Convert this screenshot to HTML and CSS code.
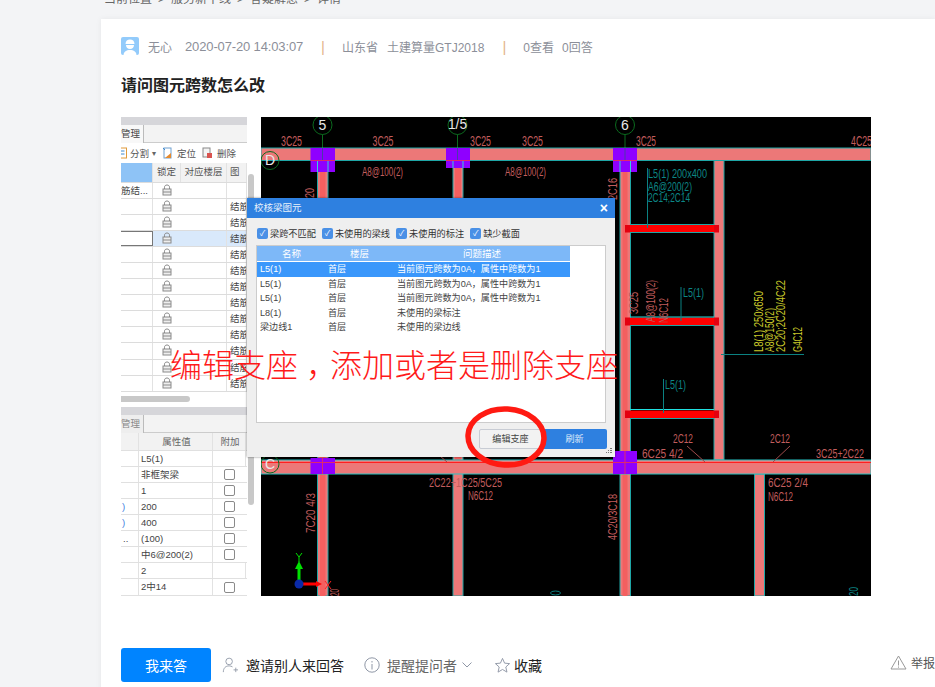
FILE: index.html
```html
<!DOCTYPE html>
<html lang="zh-CN">
<head>
<meta charset="utf-8">
<title>请问图元跨数怎么改</title>
<link rel="stylesheet" href="styles.css">
</head>
<body>
<svg class="defs" width="0" height="0">
  <symbol id="lock" viewBox="0 0 10 12"><path d="M2.500 5V3.200C2.500 1.800 3.600 1 5 1s2.500.8 2.500 2.200V5" fill="none" stroke="#8a8a8a"/><rect x="1" y="5" width="8" height="6" fill="#eee" stroke="#8a8a8a"/><path d="M1 8h8" stroke="#8a8a8a"/></symbol>
</svg>
<div class="page">
  <div class="crumbs">
    <span>当前位置</span><i>&gt;</i><span>服务新干线</span><i>&gt;</i><span>答疑解惑</span><i>&gt;</i><span>详情</span>
  </div>
  <main class="card">
    <div class="meta">
      <svg class="avatar" viewBox="0 0 18 18"><rect width="18" height="18" rx="2" fill="#93cbfb"/><path d="M4.500 7C4.500 3.800 6.500 2.500 9 2.500s4.500 1.300 4.500 4.500z" fill="#fff"/><path d="M5 8h8c0 2.700-1.800 4-4 4s-4-1.300-4-4z" fill="#fff"/><path d="M2.500 18c.3-3.500 2.800-5 6.500-5s6.200 1.500 6.500 5z" fill="#fff"/></svg>
      <span class="who">无心</span>
      <span class="date">2020-07-20 14:03:07</span>
      <span class="sep">|</span>
      <span class="place">山东省</span>
      <span class="product">土建算量GTJ2018</span>
      <span class="sep sep-b">|</span>
      <span class="views">0查看</span>
      <span class="answers">0回答</span>
    </div>
    <h1 class="title">请问图元跨数怎么改</h1>

    <div class="shot">
      <section class="panel">
        <div class="panel-main">
          <div class="panel-head"><span class="panel-x">×</span></div>
          <div class="tabs"><span class="tab">管理</span></div>
          <div class="tools">
            <svg class="tool-icon tool-clip" viewBox="0 0 10 12"><rect x="1" y="1" width="8" height="10" fill="#fff" stroke="#e09a3a"/><path d="M3 4h4M3 7h4" stroke="#3d8ad0"/></svg>
            <span>分割</span><span class="caret">▾</span>
            <svg class="tool-icon" viewBox="0 0 11 12"><rect x="2" y="1" width="7" height="10" fill="#fff" stroke="#6fa0d0"/><path d="M3 11l6-5v5z" fill="#e58a2e"/><path d="M1 1l2 2" stroke="#3d8ad0"/></svg>
            <span>定位</span>
            <svg class="tool-icon" viewBox="0 0 11 12"><rect x="1" y="1" width="7" height="9" fill="#f4f4f4" stroke="#888"/><rect x="5" y="6" width="5" height="5" fill="#d9534f"/></svg>
            <span>删除</span>
          </div>
          <div class="grid grid-head"><span class="cell-blue"></span><span>锁定</span><span>对应楼层</span><span class="cut">图</span></div>
          <div class="grid"><span class="cell-left">筋结...</span><svg class="lock"><use href="#lock"/></svg><span></span><span></span></div>
          <div class="grid"><span></span><svg class="lock"><use href="#lock"/></svg><span></span><span class="cut">结筋</span></div>
          <div class="grid"><span></span><svg class="lock"><use href="#lock"/></svg><span></span><span class="cut">结筋</span></div>
          <div class="grid grid-sel"><span class="cell-focus"></span><svg class="lock"><use href="#lock"/></svg><span></span><span class="cut">结筋</span></div>
          <div class="grid"><span></span><svg class="lock"><use href="#lock"/></svg><span></span><span class="cut">结筋</span></div>
          <div class="grid"><span></span><svg class="lock"><use href="#lock"/></svg><span></span><span class="cut">结筋</span></div>
          <div class="grid"><span></span><svg class="lock"><use href="#lock"/></svg><span></span><span class="cut">结筋</span></div>
          <div class="grid"><span></span><svg class="lock"><use href="#lock"/></svg><span></span><span class="cut">结筋</span></div>
          <div class="grid"><span></span><svg class="lock"><use href="#lock"/></svg><span></span><span class="cut">结筋</span></div>
          <div class="grid"><span></span><svg class="lock"><use href="#lock"/></svg><span></span><span class="cut">结筋</span></div>
          <div class="grid"><span></span><svg class="lock"><use href="#lock"/></svg><span></span><span class="cut">结筋</span></div>
          <div class="grid"><span></span><svg class="lock"><use href="#lock"/></svg><span></span><span class="cut">结筋</span></div>
          <div class="grid"><span></span><svg class="lock"><use href="#lock"/></svg><span></span><span class="cut">结筋</span></div>
          <div class="hscroll"><span class="hthumb"></span></div>
          <div class="panel-head panel-head-b"></div>
          <div class="tabs tabs-b"><span class="tab tab-dim">管理</span></div>
          <div class="prop prop-head"><span></span><span class="center">属性值</span><span class="center">附加</span></div>
          <div class="prop"><span></span><span>L5(1)</span><span></span></div>
          <div class="prop"><span></span><span>非框架梁</span><b class="box"></b></div>
          <div class="prop"><span></span><span>1</span><b class="box"></b></div>
          <div class="prop"><span class="blue">)</span><span>200</span><b class="box"></b></div>
          <div class="prop"><span class="blue">)</span><span>400</span><b class="box"></b></div>
          <div class="prop"><span>..</span><span>(100)</span><b class="box"></b></div>
          <div class="prop"><span></span><span>中6@200(2)</span><b class="box"></b></div>
          <div class="prop"><span></span><span>2</span><span></span></div>
          <div class="prop"><span></span><span>2中14</span><b class="box"></b></div>
        </div>
        <div class="vscroll"><span class="vthumb"></span><span class="vthumb vthumb-b"></span></div>
      </section>

      <svg class="cad" viewBox="261 117 610 479" width="610" height="479">
        <rect class="bg" x="261" y="117" width="610" height="479"/>
        <!-- axis leaders -->
        <g class="axis">
          <circle cx="322.500" cy="125" r="9.500"/><circle cx="457.500" cy="125" r="9.500"/><circle cx="625" cy="125" r="9.500"/>
          <path d="M322.500 134.500V148M457.500 134.500V148M625 134.500V148"/>
        </g>
        <!-- columns -->
        <rect class="beam" x="317.500" y="160" width="10.500" height="436"/>
        <rect class="beam-in" x="320" y="160" width="5.500" height="436"/>
        <rect class="beam" x="453" y="160" width="10" height="436"/>
        <rect class="beam-in" x="455" y="160" width="6" height="300"/>
        <rect class="beam" x="620" y="160" width="10.500" height="436"/>
        <rect class="beam-in" x="622.500" y="160" width="5" height="436"/>
        <rect class="beam" x="714" y="160" width="10" height="300"/>
        <rect class="beam" x="754.500" y="474" width="10" height="122"/>
        <!-- beams -->
        <rect class="beam" x="261" y="148" width="610" height="12.500"/>
        <rect class="beam beam-c" x="261" y="460" width="610" height="14"/>
        <path class="red-line" d="M261 462.500H871"/>
        <g class="axis">
          <circle cx="270" cy="160.500" r="9"/><circle cx="270" cy="464" r="9"/>
        </g>
        <!-- supports -->
        <g class="support">
          <rect x="310.500" y="148" width="24.500" height="24"/>
          <rect x="446" y="148" width="24" height="20"/>
          <rect x="613" y="148" width="24" height="24"/>
          <rect x="310.500" y="458" width="24.500" height="16"/>
          <rect x="613" y="451" width="24" height="23"/>
        </g>
        <path class="mid" d="M317.500 160V172M328 160V172M453 160V168M463 160V168M620 160V172M630.500 160V172"/>
        <path class="pink-line" d="M310.500 160.500H335M446 160.500H470M613 160.500H637M322.500 458V474M310.500 462.500H335M613 462.500H637M625 451V474"/>
        <path class="axis-in" d="M322.500 148V160M457.500 148V160M625 148V160"/>
        <!-- secondary beams -->
        <g class="red-beam">
          <rect x="630" y="225" width="84" height="7.500"/><rect x="630" y="317.500" width="84" height="8"/><rect x="630" y="410.500" width="84" height="7.500"/>
        </g>
        <g class="red-end">
          <rect x="625" y="225" width="5" height="7.500"/><rect x="714" y="225" width="5" height="7.500"/>
          <rect x="625" y="317.500" width="5" height="8"/><rect x="714" y="317.500" width="5" height="8"/>
          <rect x="625" y="410.500" width="5" height="7.500"/><rect x="714" y="410.500" width="5" height="7.500"/>
        </g>
        <path class="edge" d="M630 224.500H714M630 232.500H714M630 325.500H714M630 418.500H714"/>
        <path class="cyan" d="M630 317H714M630 409.500H714"/>
        <!-- leaders -->
        <path class="teal-line" d="M647.500 168V228M681 287V321M663.500 379V413M721 354.500H804"/>
        <path class="pink-thin" d="M687 446L705 462M790 446L773 462M440 456L447 462"/>
        <!-- red rebar text -->
        <g class="t-red">
          <text x="281" y="146" textLength="21" lengthAdjust="spacingAndGlyphs">3C25</text>
          <text x="372.500" y="146" textLength="21" lengthAdjust="spacingAndGlyphs">3C25</text>
          <text x="470" y="146" textLength="21" lengthAdjust="spacingAndGlyphs">3C25</text>
          <text x="522" y="146" textLength="21" lengthAdjust="spacingAndGlyphs">3C25</text>
          <text x="636" y="146" textLength="20" lengthAdjust="spacingAndGlyphs">3C25</text>
          <text x="851" y="146" textLength="21" lengthAdjust="spacingAndGlyphs">4C25</text>
          <text class="s" x="362" y="176" textLength="41" lengthAdjust="spacingAndGlyphs">A8@100(2)</text>
          <text class="s" x="505" y="176" textLength="41" lengthAdjust="spacingAndGlyphs">A8@100(2)</text>
          <text class="s" x="642" y="458" textLength="41" lengthAdjust="spacingAndGlyphs">6C25 4/2</text>
          <text class="s" x="673" y="443" textLength="20" lengthAdjust="spacingAndGlyphs">2C12</text>
          <text class="s" x="770" y="443" textLength="20" lengthAdjust="spacingAndGlyphs">2C12</text>
          <text class="s" x="816" y="458" textLength="48" lengthAdjust="spacingAndGlyphs">3C25+2C22</text>
          <text class="s" x="768" y="487" textLength="40" lengthAdjust="spacingAndGlyphs">6C25 2/4</text>
          <text class="s" x="768" y="501" textLength="25" lengthAdjust="spacingAndGlyphs">N6C12</text>
          <text class="s" x="429" y="487" textLength="73" lengthAdjust="spacingAndGlyphs">2C22+1C25/5C25</text>
          <text class="s" x="468" y="500" textLength="25" lengthAdjust="spacingAndGlyphs">N6C12</text>
          <text class="s" transform="translate(314 198) rotate(-90)" textLength="10" lengthAdjust="spacingAndGlyphs">20</text>
          <text class="s" transform="translate(617 200) rotate(-90)" textLength="22" lengthAdjust="spacingAndGlyphs">2C16</text>
          <text class="s" transform="translate(315 533) rotate(-90)" textLength="40" lengthAdjust="spacingAndGlyphs">7C20 4/3</text>
          <text class="s" transform="translate(617 540) rotate(-90)" textLength="46" lengthAdjust="spacingAndGlyphs">4C20/3C18</text>
          <text class="s" transform="translate(339 596) rotate(-90)" textLength="7" lengthAdjust="spacingAndGlyphs">20</text>
          <text class="s" transform="translate(638 314) rotate(-90)" textLength="22" lengthAdjust="spacingAndGlyphs">3C25</text>
          <text class="s" transform="translate(655 322) rotate(-90)" textLength="42" lengthAdjust="spacingAndGlyphs">A8@100(2)</text>
          <text class="s" transform="translate(668 323) rotate(-90)" textLength="25" lengthAdjust="spacingAndGlyphs">N6C12</text>
        </g>
        <!-- teal text -->
        <g class="t-teal">
          <text x="648" y="178" textLength="59" lengthAdjust="spacingAndGlyphs">L5(1) 200x400</text>
          <text x="648" y="191" textLength="44" lengthAdjust="spacingAndGlyphs">A6@200(2)</text>
          <text x="648" y="202" textLength="42" lengthAdjust="spacingAndGlyphs">2C14;2C14</text>
          <text x="683" y="297" textLength="21" lengthAdjust="spacingAndGlyphs">L5(1)</text>
          <text x="665" y="389" textLength="21" lengthAdjust="spacingAndGlyphs">L5(1)</text>
          <text transform="translate(858 596) rotate(-90)" textLength="9" lengthAdjust="spacingAndGlyphs">20</text>
        </g>
        <ellipse class="teal-line" cx="555.500" cy="593" rx="5" ry="2"/>
        <!-- yellow text -->
        <g class="t-yellow">
          <text transform="translate(763 352) rotate(-90)" textLength="61" lengthAdjust="spacingAndGlyphs">L8(1) 250x650</text>
          <text transform="translate(774 352) rotate(-90)" textLength="44" lengthAdjust="spacingAndGlyphs">A8@150(2)</text>
          <text transform="translate(785 352) rotate(-90)" textLength="72" lengthAdjust="spacingAndGlyphs">2C20;2C20/4C22</text>
          <text transform="translate(802 352) rotate(-90)" textLength="25" lengthAdjust="spacingAndGlyphs">G4C12</text>
        </g>
        <!-- axis labels -->
        <g class="t-white">
          <text x="322.500" y="130" text-anchor="middle">5</text>
          <text x="457.500" y="129" text-anchor="middle" textLength="19" lengthAdjust="spacingAndGlyphs">1/5</text>
          <text x="625" y="130" text-anchor="middle">6</text>
          <text x="270" y="165" text-anchor="middle">D</text>
          <text x="270" y="469" text-anchor="middle">C</text>
        </g>
        <!-- ucs -->
        <path class="ucs-y" d="M299 581V569"/><path class="ucs-yh" d="M295 569L299 561L303 569z"/>
        <path class="ucs-x" d="M303 584H316"/><path class="ucs-xh" d="M316 581L322 584L316 587z"/>
        <circle class="ucs-o" cx="299" cy="584" r="4.500"/>
        <path class="ucs-yt" d="M296 553L299 557L302 553M299 557V562"/>
        <path class="ucs-xt" d="M325 581L331 589M331 581L325 589"/>
      </svg>

      <section class="dialog">
        <header class="dlg-title"><span>校核梁图元</span><span class="dlg-x">×</span></header>
        <div class="checks">
          <label class="check"><b class="tick">✓</b>梁跨不匹配</label>
          <label class="check"><b class="tick">✓</b>未使用的梁线</label>
          <label class="check"><b class="tick">✓</b>未使用的标注</label>
          <label class="check"><b class="tick">✓</b>缺少截面</label>
        </div>
        <div class="dlg-table">
          <div class="row row-head"><span class="c-a">名称</span><span class="c-b">楼层</span><span class="c-c">问题描述</span></div>
          <div class="row row-sel"><span>L5(1)</span><span>首层</span><span>当前图元跨数为0A，属性中跨数为1</span></div>
          <div class="row"><span>L5(1)</span><span>首层</span><span>当前图元跨数为0A，属性中跨数为1</span></div>
          <div class="row"><span>L5(1)</span><span>首层</span><span>当前图元跨数为0A，属性中跨数为1</span></div>
          <div class="row"><span>L8(1)</span><span>首层</span><span>未使用的梁标注</span></div>
          <div class="row"><span>梁边线1</span><span>首层</span><span>未使用的梁边线</span></div>
        </div>
        <div class="dlg-actions">
          <button class="btn-edit">编辑支座</button>
          <button class="btn-refresh">刷新</button>
        </div>
        <svg class="grip" viewBox="0 0 6 6"><path d="M4 0h2v1H4zM2 2h1v1H2zM4 2h2v1H4zM0 4h1v1H0zM2 4h1v1H2zM4 4h2v1H4z" fill="#777"/></svg>
      </section>

      <div class="note">编辑支座<span class="comma">，</span>添加或者是删除支座</div>
      <svg class="ring" viewBox="0 0 84 66"><ellipse cx="42" cy="33" rx="38" ry="28" transform="rotate(3 42 33)"/></svg>
    </div>

    <footer class="actions">
      <button class="answer">我来答</button>
      <a class="act act-invite"><svg class="ic" viewBox="0 0 18 18"><circle cx="8" cy="5" r="3.700"/><path d="M1.500 17c0-4.500 2.500-7 6.500-7 1.500 0 2.800.4 3.800 1.100M13 14.500h5M15.500 12v5"/></svg><span>邀请别人来回答</span></a>
      <a class="act act-remind"><svg class="ic" viewBox="0 0 16 16"><circle cx="8" cy="8" r="7.200"/><path d="M8 4v1.500M8 7v5.500"/></svg><span>提醒提问者</span><svg class="chev" viewBox="0 0 10 6"><path d="M.5.500L5 5 9.500.500"/></svg></a>
      <a class="act act-star"><svg class="ic" viewBox="0 0 18 18"><path d="M9 1.500l2.200 5 5.300.500-4 3.600 1.200 5.400L9 13.200 4.300 16l1.200-5.400-4-3.600 5.300-.5z"/></svg><span>收藏</span></a>
      <a class="report"><svg class="ic-warn" viewBox="0 0 17 15"><path d="M8.500 1L16 14H1z"/><path d="M8.500 5.500v5M8.500 11.500v1.200"/></svg><span>举报</span></a>
    </footer>
  </main>
</div>
</body>
</html>
```

FILE: styles.css
```css
* { box-sizing: border-box; }
html, body { margin: 0; height: 687px; overflow: hidden; background: #f3f4f6; }
body { font-family: "Liberation Sans", "Noto Sans CJK SC", sans-serif; color: #333; }
.defs { position: absolute; }
.page { height: 687px; overflow: hidden; padding-left: 101px; }

.crumbs { margin-top: -9px; height: 28px; padding-left: 3px; display: flex; align-items: flex-start; font-size: 12px; line-height: 17px; color: #666; }
.crumbs i { font-style: normal; width: 19px; text-align: center; }

.card { background: #fff; height: 700px; padding: 18px 0 0 20px; box-shadow: 0 0 6px rgba(0,0,0,.06); position: relative; }

.meta { display: flex; align-items: center; height: 18px; font-size: 12px; color: #8c8f99; white-space: nowrap; }
.avatar { width: 18px; height: 18px; flex: none; }
.who { margin-left: 9px; }
.date { margin-left: 13px; font-size: 13px; letter-spacing: -.14px; }
.sep { margin-left: 18px; color: #e3b48d; font-size: 15px; }
.place { margin-left: 17px; }
.product { margin-left: 9px; }
.sep-b { margin-left: 18px; }
.views { margin-left: 17px; }
.answers { margin-left: 8px; }

.title { margin: 21px 0 0; font-size: 16px; line-height: 20px; font-weight: 700; color: #222; height: 20px; }

.shot { position: relative; display: flex; width: 750px; height: 479px; margin-top: 21px; background: #fff; }

.panel { width: 137px; flex: none; margin-right: 3px; display: flex; font-size: 9.500px; line-height: 15px; color: #444; overflow: hidden; }
.panel-main { width: 126px; flex: none; overflow: hidden; }
.panel-head { height: 8px; background: #d6d6da; position: relative; }
.panel-x { position: absolute; right: -6px; top: -4px; font-size: 9px; color: #666; }
.tabs { height: 18px; background: #f3f3f3; border-bottom: 1px solid #ccc; }
.tab { display: inline-block; width: 23px; height: 18px; background: #f8f8f8; border-right: 1px solid #bbb; text-align: right; padding-right: 3px; line-height: 18px; overflow: hidden; color: #444; }
.tab-dim { color: #888; background: #eee; }
.tools { height: 20px; display: flex; align-items: center; white-space: nowrap; color: #555; }
.tool-icon { width: 11px; height: 12px; flex: none; margin-left: 6px; margin-right: 4px; }
.tool-clip { margin-left: -4px; margin-right: 2px; }
.caret { margin-left: 3px; font-size: 8px; color: #666; }

.grid { display: grid; grid-template-columns: 32px 28px 46px 20px; height: 16.100px; border-bottom: 1px solid #dcdcdc; background: #fff; }
.grid > * { border-right: 1px solid #e2e2e2; overflow: hidden; white-space: nowrap; }
.grid-head { height: 19.500px; background: #f2f2f2; align-items: stretch; line-height: 18px; text-align: center; color: #555; }
.cell-blue { background: #8ec3f6; }
.cell-left { text-align: right; padding-right: 11px; }
.cut { text-align: left; padding-left: 3px; }
.lock { width: 10px; height: 12px; margin: 1px 0 0 9px; border: 0; overflow: visible; justify-self: start; }
.grid-sel { background: #d9e9fb; }
.cell-focus { background: #fff; border: 1.500px solid #777; border-left: 0; }
.hscroll { height: 15px; background: #fff; padding-top: 1px; }
.hthumb { display: block; width: 69px; height: 6px; background: #c8c8c8; border-radius: 0 3px 3px 0; margin-top: 3px; }
.panel-head-b { background: #d6d6da; }
.tabs-b { height: 18px; }
.prop { display: grid; grid-template-columns: 18px 74px 33px; height: 16.100px; border-bottom: 1px solid #e0e0e0; align-items: center; white-space: nowrap; overflow: hidden; }
.prop > span { padding-left: 2px; height: 100%; border-right: 1px solid #e2e2e2; }
.prop-head { height: 18px; background: #f2f2f2; color: #666; }
.center { text-align: center; padding: 1px 0 0; }
.blue { color: #3f7fe0; padding-left: 1px !important; }
.box { width: 11px; height: 11px; border: 1px solid #8a8a8a; border-radius: 2px; background: #fff; margin-left: 11px; }

.vscroll { width: 11px; position: relative; background: #fff; }
.vthumb { position: absolute; left: 1px; top: 57px; width: 6px; height: 80px; background: #c8c8c8; border-radius: 3px; }
.vthumb-b { top: 300px; height: 88px; }

.cad { display: block; flex: none; }
.bg { fill: #000; }
.beam { fill: #ec7878; stroke: #1fa6a6; stroke-width: 1; }
.beam-c { stroke: #27c4c4; }
.beam-in { fill: #f45f5f; }
.red-line { stroke: #ff1f1f; stroke-width: 1; fill: none; }
.support rect { fill: #8f00ff; }
.mid { stroke: #35d0d8; stroke-width: 1; fill: none; }
.pink-line { stroke: #e02a6a; stroke-width: 1; fill: none; }
.axis circle { fill: none; stroke: #0b6a1e; stroke-width: 1; }
.axis path { stroke: #0b6a1e; stroke-width: 1; fill: none; }
.axis-in { stroke: #4a3aa8; stroke-width: 1; fill: none; }
.red-beam rect { fill: #ff0000; }
.red-end rect { fill: #e4000f; }
.edge { stroke: #1fa6a6; stroke-width: 1; fill: none; }
.cyan { stroke: #20e0e0; stroke-width: 1; fill: none; }
.teal-line { stroke: #0b8282; stroke-width: 1; fill: none; }
.pink-thin { stroke: #a04a4a; stroke-width: 1; fill: none; }
.t-red text, .t-teal text, .t-yellow text { font-family: "Liberation Sans", sans-serif; font-size: 13px; }
.t-red text { fill: #c25d5d; font-size: 14px; }
.t-red text.s { font-size: 12.500px; }
.t-teal text { fill: #0c8686; }
.t-yellow text { fill: #c9c92a; }
.t-white text { fill: #e8e8e8; font-family: "Liberation Sans", sans-serif; font-size: 14px; }
.ucs-y { stroke: #00e000; stroke-width: 3; }
.ucs-yh { fill: #00e000; }
.ucs-x { stroke: #ff0000; stroke-width: 3; }
.ucs-xh { fill: #ff0000; }
.ucs-o { fill: #0a2aa8; }
.ucs-yt { stroke: #00e000; fill: none; }
.ucs-xt { stroke: #ff2020; fill: none; }

.dialog { position: absolute; left: 126px; top: 81px; width: 368px; height: 259px; background: #efefef; font-size: 9.500px; line-height: 14px; color: #444; box-shadow: 0 0 2px rgba(0,0,0,.5); padding: 0 9px; }
.dlg-title { height: 20px; margin: 0 -9px; padding: 0 7px; background: #2e80e0; color: #e8f1fb; display: flex; justify-content: space-between; align-items: center; }
.dlg-x { font-size: 14px; font-weight: 700; color: #fff; margin-right: 0; }
.checks { display: flex; gap: 6px; height: 27px; padding: 9px 0 0 1px; }
.check { display: flex; align-items: center; height: 13px; white-space: nowrap; font-size: 9.200px; color: #333; }
.tick { width: 11px; height: 11px; margin-right: 2px; background: #4a90e6; border-radius: 2px; color: #fff; font-size: 8px; line-height: 11px; text-align: center; font-weight: 400; }
.dlg-table { height: 178px; background: #fff; border: 1px solid #ccc; }
.row { display: grid; grid-template-columns: 68px 69px 174px; width: 313px; height: 14.500px; line-height: 14.500px; padding-left: 3px; white-space: nowrap; font-size: 9.100px; }
.row-head { height: 15px; line-height: 15px; background: #7db8f8; color: #fff; padding-left: 0; font-size: 9.500px; display: flex; }
.row-head .c-a { margin-left: 25px; }
.row-head .c-b { margin-left: 49px; }
.row-head .c-c { margin-left: 94px; }
.row-sel { background: #3a97fb; color: #fff; margin-top: 1px; }
.dlg-actions { display: flex; justify-content: flex-end; margin: 6px -1px 0 0; }
.dlg-actions button { height: 20px; padding: 0; font: inherit; font-size: 9.100px; line-height: 18px; border-radius: 2px; }
.btn-edit { width: 63px; background: #f2f2f2; border: 1px solid #c8ccd4; color: #444; }
.btn-refresh { width: 65px; background: #2e80e0; border: 0; color: #dfeafa; }
.grip { position: absolute; right: 3px; bottom: 3px; width: 6px; height: 6px; }

.note { position: absolute; left: 49px; top: 226px; font-size: 32px; line-height: 46px; color: #ff1a1a; white-space: nowrap; font-weight: 300; }
.comma { display: inline-block; width: 32px; padding-left: 8px; }
.ring { position: absolute; left: 343px; top: 287px; width: 84px; height: 66px; }
.ring ellipse { fill: none; stroke: #ff1a12; stroke-width: 5.500; }

.actions { position: relative; display: flex; align-items: center; height: 34px; margin-top: 52px; font-size: 14px; color: #222; white-space: nowrap; }
.answer { width: 90px; height: 34px; border: 0; border-radius: 3px; background: #0084ff; color: #fff; font: inherit; font-size: 14px; padding: 0; }
.act { display: flex; align-items: center; }
.ic { width: 16px; height: 16px; fill: none; stroke: #8f97a6; stroke-width: 1; flex: none; }
.act-invite { margin-left: 11px; }
.act-invite span { margin-left: 8px; }
.act-remind { margin-left: 20px; color: #666; }
.act-remind span { margin-left: 7px; }
.chev { width: 10px; height: 6px; margin-left: 5px; fill: none; stroke: #8f97a6; stroke-width: 1; }
.act-star { margin-left: 22px; }
.act-star .ic { width: 17px; height: 17px; }
.act-star span { margin-left: 3px; }
.report { position: absolute; left: 769px; top: 6px; display: flex; align-items: center; font-size: 12px; color: #555; }
.report span { margin-left: 4px; }
.ic-warn { width: 17px; height: 15px; fill: none; stroke: #999; stroke-width: 1; }
```
